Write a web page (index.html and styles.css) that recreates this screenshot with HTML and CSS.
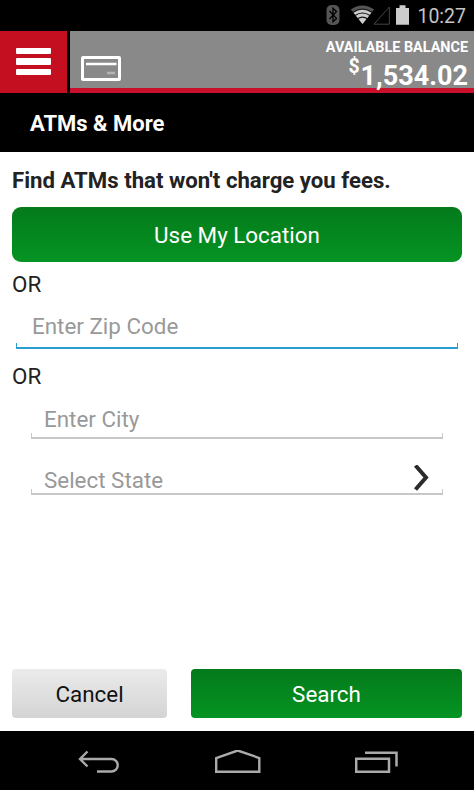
FILE: index.html
```html
<!DOCTYPE html>
<html lang="en">
<head>
  <meta charset="utf-8">
  <meta name="viewport" content="width=device-width, initial-scale=1">
  <title>ATMs &amp; More</title>
  <link rel="stylesheet" href="styles.css">
</head>
<body>
  <div class="status-bar">
    <svg class="status-icons" width="84" height="31" viewBox="0 0 84 31">
      <!-- bluetooth -->
      <rect x="0.500" y="5" width="13" height="20" rx="5" fill="#555"/>
      <path d="M3.500 11l7 7.400-3.500 3.400V8.200l3.500 3.400-7 7.400" fill="none" stroke="#000" stroke-width="1.300"/>
      <!-- wifi -->
      <path d="M24.800 9.500Q36.500 1.500 48 9.500L36.500 24z" fill="#555"/>
      <path d="M27.500 12.800Q36.500 6.500 45.500 12.800L36.500 24z" fill="#ccc"/>
      <path d="M26.500 12.500Q36.500 5.500 46.500 12.500M29 15.500Q36.500 10.500 44 15.500M31.500 18.700Q36.500 15.500 41.500 18.700" fill="none" stroke="#111" stroke-width="1.100"/>
      <!-- signal -->
      <path d="M48 24.200L63.300 7V24.200z" fill="none" stroke="#444" stroke-width="1"/>
      <!-- battery -->
      <path d="M70 8h3.500V5.200h6V8h3.500v16.800h-13z" fill="#ccc"/>
    </svg>
    <span class="clock">10:27</span>
  </div>

  <header class="header">
    <button class="menu-btn" aria-label="Menu">
      <span></span>
      <span></span>
      <span></span>
    </button>
    <div class="account">
      <svg class="card-icon" width="40" height="25" viewBox="0 0 40 25">
        <rect x="1.500" y="1.500" width="37" height="22" rx="0.500" fill="none" stroke="#fff" stroke-width="3"/>
        <path d="M5 8H35.500" stroke="#fff" stroke-width="2.500"/>
        <path d="M26 17h8" stroke="#b5b5b5" stroke-width="2.500"/>
      </svg>
      <div class="balance">
        <div class="balance-label">AVAILABLE BALANCE</div>
        <div class="balance-amount"><span class="currency">$</span><span>1,534.02</span></div>
      </div>
    </div>
  </header>

  <h1 class="page-title">ATMs &amp; More</h1>

  <main class="content">
    <h2 class="intro">Find ATMs that won't charge you fees.</h2>
    <button class="btn btn-green btn-location">Use My Location</button>
    <div class="or">OR</div>
    <div class="field field-zip">
      <input type="text" placeholder="Enter Zip Code">
    </div>
    <div class="or or-second">OR</div>
    <div class="field field-city">
      <input type="text" placeholder="Enter City">
    </div>
    <div class="field field-state">
      <span>Select State</span>
      <svg width="18" height="30" viewBox="0 0 18 30">
        <path d="M3.500 0.500L14 12.500L3.500 24.500" fill="none" stroke="#2b2b2b" stroke-width="4"/>
      </svg>
    </div>
    <div class="actions">
      <button class="btn btn-grey">Cancel</button>
      <button class="btn btn-green btn-search">Search</button>
    </div>
  </main>

  <nav class="nav-bar">
    <svg width="42" height="24" viewBox="0 0 42 24">
      <path d="M9.500 1.500L2 9L9.500 16.500M2 9H33.500a6.200 6.200 0 0 1 0 12.500H19" fill="none" stroke="#aaa" stroke-width="2.400"/>
    </svg>
    <svg width="46" height="24" viewBox="0 0 46 24">
      <path d="M1.200 21.800V8L22.700 0.500L44.300 8V21.800z" fill="none" stroke="#aaa" stroke-width="2.400"/>
    </svg>
    <svg width="43" height="24" viewBox="0 0 43 24">
      <path d="M1.200 8.700H34V21.700H1.200zM10 2.700H41.500V16.500" fill="none" stroke="#aaa" stroke-width="2.500"/>
    </svg>
  </nav>
</body>
</html>
```

FILE: styles.css
```css
* {
  box-sizing: border-box;
}
body {
  display: flex;
  flex-direction: column;
  height: 100vh;
  margin: 0;
  background: #fff;
  color: #222;
  font-family: Roboto, "Liberation Sans", sans-serif;
  font-size: 22.4px;
}
button,
input {
  border: 0;
  padding: 0;
  font: inherit;
}
svg {
  display: block;
}

/* status bar */
.status-bar {
  display: flex;
  justify-content: flex-end;
  align-items: center;
  height: 31px;
  padding-right: 8px;
  background: #000;
}
.status-icons {
  margin-right: 7px;
}
.clock {
  color: #c4c4c4;
  font-size: 19.5px;
  line-height: 31px;
  padding-top: 1px;
}

/* header */
.header {
  display: flex;
  gap: 3px;
  height: 62px;
  background: #000;
}
.menu-btn {
  display: flex;
  flex-direction: column;
  align-items: center;
  gap: 4px;
  width: 67px;
  padding-top: 17px;
  background: #c40f20;
}
.menu-btn span {
  width: 35px;
  height: 6.4px;
  border-radius: 1px;
  background: #fff;
}
.account {
  display: flex;
  flex: 1;
  justify-content: space-between;
  padding: 0 6px 0 11px;
  border-bottom: 5px solid #c8102a;
  background: #898989;
  color: #fff;
  font-weight: bold;
}
.card-icon {
  margin-top: 25px;
}
.balance {
  text-align: right;
  white-space: nowrap;
}
.balance-label {
  padding-top: 8px;
  font-size: 14.4px;
  line-height: 17px;
}
.balance-amount {
  display: flex;
  justify-content: flex-end;
  font-size: 27px;
  line-height: 41px;
}
.currency {
  margin-right: 1px;
  font-size: 19.5px;
  line-height: 22px;
}
.page-title {
  height: 59px;
  margin: 0;
  padding-left: 30px;
  background: #000;
  color: #fff;
  font-size: 22px;
  line-height: 61px;
}

/* content */
.content {
  display: flex;
  flex: 1;
  flex-direction: column;
  padding: 14px 12px 13px;
}
.intro {
  margin: 0 0 12px;
  font-size: 22.2px;
  line-height: 29px;
  white-space: nowrap;
}
.btn {
  border-radius: 4px;
  color: #fff;
}
.btn-green {
  background: linear-gradient(#047a1b, #059423);
}
.btn-grey {
  width: 155px;
  background: linear-gradient(#ebebeb, #d4d4d4);
  color: #111;
}
.btn-location {
  height: 55px;
  border-radius: 9px;
}
.or {
  margin-top: 7px;
  line-height: 30px;
}
.or-second {
  margin-top: 12px;
}

/* text fields with the short upturned line ends */
.field {
  display: flex;
  align-items: center;
  color: #999;
  border: solid #ccc;
  border-width: 0 1px 2px;
  border-image: linear-gradient(transparent calc(100% - 6px), #c8c8c8 calc(100% - 6px)) 0 1 2 1;
}
.field input {
  width: 100%;
  background: none;
  outline: none;
}
.field input::placeholder {
  color: #999;
  opacity: 1;
}
.field-zip {
  height: 50px;
  margin: 0 4px;
  padding: 6px 15px 0;
  border-image-source: linear-gradient(transparent calc(100% - 6px), #2a9fcf calc(100% - 6px));
}
.field-city {
  height: 48px;
  margin: 0 19px;
  padding: 10px 12px 0;
}
.field-state {
  justify-content: space-between;
  height: 56px;
  margin: 0 19px;
  padding: 27px 12px 0;
}
.actions {
  display: flex;
  gap: 24px;
  height: 49px;
  margin-top: auto;
}
.btn-search {
  flex: 1;
}

/* navigation bar */
.nav-bar {
  display: flex;
  justify-content: space-between;
  height: 59px;
  padding: 19px 76px 0 78px;
  background: #000;
}
```
